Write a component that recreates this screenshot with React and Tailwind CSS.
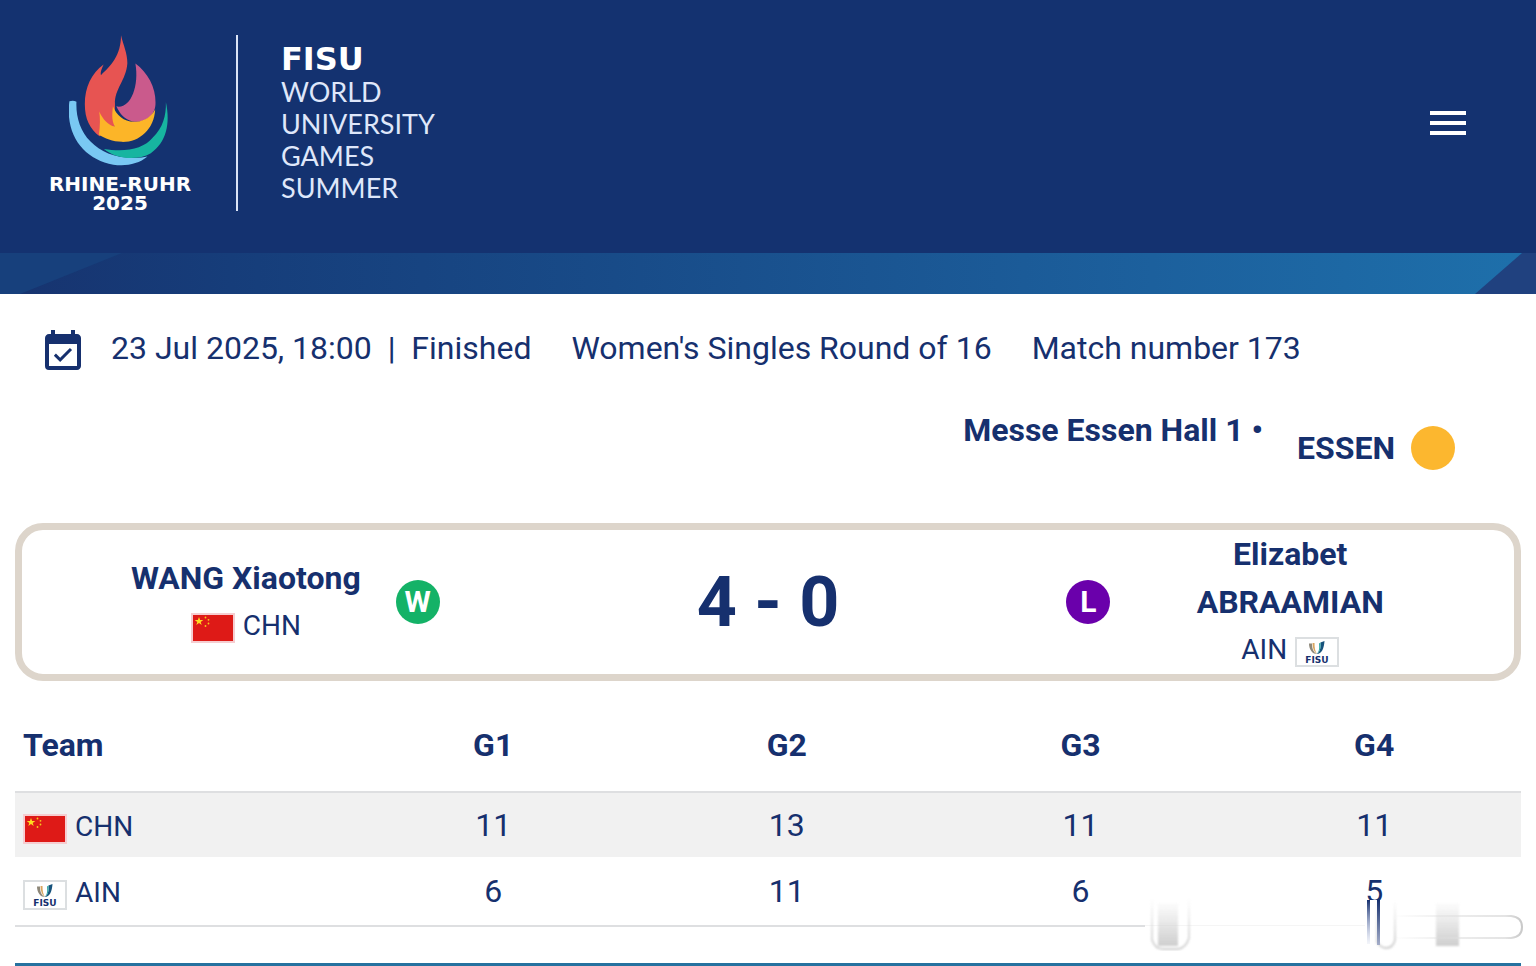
import React from "react";
import { MdEventAvailable, MdMenu } from "react-icons/md";

const games = ["G1", "G2", "G3", "G4"];

const teams = [
  { code: "CHN", scores: [11, 13, 11, 11] },
  { code: "AIN", scores: [6, 11, 6, 5] }
];

function FlameLogo() {
  return (
    <svg className="w-[102px] h-[132px]" viewBox="118 44 304 394" aria-hidden="true">
      <path
        fill="#79c8f3"
        d="M119 242 Q130 238 140 243 C138 285 150 330 182 362 C215 395 262 416 335 410 L352 407 C325 430 285 437 250 431 C165 417 105 345 119 242Z"
      />
      <path
        fill="#17b5a0"
        d="M407 245 C421 310 408 365 362 397 C318 422 255 412 222 384 C285 394 340 385 368 350 C398 322 408 285 407 245Z"
      />
      <path
        fill="#ca5a8c"
        d="M316 129 C352 155 377 200 376 245 C377 290 340 308 308 302 C283 296 270 280 259 257 C300 266 328 200 316 129Z"
      />
      <path
        fill="#e75452"
        d="M273 45 C280 75 292 98 292 128 C288 180 253 205 255 250 L254 318 L209 346 C180 325 165 295 165 250 C165 200 185 158 221 132 C214 147 211 156 213 164 C243 136 273 105 273 45Z"
      />
      <path
        fill="#fcb528"
        d="M249 257 C260 285 284 306 318 303 C344 300 362 289 375 266 C372 325 328 364 276 363 C248 362 224 353 207 341 C211 315 211 290 208 272 C219 296 235 313 254 317 C244 296 247 277 249 257Z"
      />
    </svg>
  );
}

function ChinaFlag() {
  return (
    <svg className="w-[44px] h-[30px] shrink-0" viewBox="0 0 44 30" role="img" aria-label="China">
      <rect width="44" height="30" fill="#f6cdd0" />
      <rect x="2" y="2" width="40" height="26" fill="#de1a17" />
      <path fill="#ffdc20" d="M8 4l1.100 3h3.200l-2.600 1.900 1 3L8 10.100 5.300 11.900l1-3L3.700 7h3.200z" />
      <g fill="#f8c91c">
        <circle cx="14.500" cy="4.500" r="0.9" />
        <circle cx="17.500" cy="6.800" r="0.9" />
        <circle cx="17.500" cy="10.500" r="0.9" />
        <circle cx="14.500" cy="13" r="0.9" />
      </g>
    </svg>
  );
}

function FisuFlag() {
  return (
    <svg className="w-[44px] h-[30px] shrink-0" viewBox="0 0 44 30" role="img" aria-label="FISU">
      <rect x="1" y="1" width="42" height="28" fill="#fff" stroke="#dcdfe1" strokeWidth="2" />
      <path d="M14 6.500 H17 C17 11 18 15 22 17 C17 17 14 12 14 6.500Z" fill="#8d8779" />
      <path d="M17.500 6 H19.500 C19.500 11 20 14 22 17 C19 15 17.500 11 17.500 6Z" fill="#d9a55e" />
      <path d="M29.500 4 L25.500 5.500 C26 11 25 15 21.500 17 C27 17 29 11 29.500 4Z" fill="#16527c" />
      <path d="M25.500 5.500 L24 6.500 C24.500 12 24 15 21.500 17 C25 15.500 26 11 25.500 5.500Z" fill="#34a7a5" />
      <text
        x="22"
        y="26"
        textAnchor="middle"
        fontSize="9"
        fontWeight="700"
        fontFamily="DejaVu Sans, sans-serif"
        fill="#16306e"
      >
        FISU
      </text>
    </svg>
  );
}

function Flag({ code }) {
  return code === "CHN" ? <ChinaFlag /> : <FisuFlag />;
}

function HeaderStrip() {
  return (
    <svg className="block w-full h-[41px]" viewBox="0 0 1536 41" preserveAspectRatio="none" aria-hidden="true">
      <defs>
        <linearGradient id="strip" x1="0" x2="1" y1="0" y2="0">
          <stop offset="0" stopColor="#17336f" />
          <stop offset="0.15" stopColor="#163d7a" />
          <stop offset="0.4" stopColor="#184b88" />
          <stop offset="0.75" stopColor="#1c609d" />
          <stop offset="1" stopColor="#1e70ab" />
        </linearGradient>
      </defs>
      <rect width="1536" height="41" fill="url(#strip)" />
      <path d="M0 0H122L20 41H0Z" fill="#17407c" />
      <path d="M1522 0H1536V41H1475Z" fill="#20417f" />
    </svg>
  );
}

// Faded glass shapes lying over the end of the table
function GlassOverlay() {
  return (
    <svg
      className="absolute right-[-4px] -bottom-6 w-[382px] h-[54px] pointer-events-none"
      viewBox="0 0 382 54"
      aria-hidden="true"
    >
      <defs>
        <linearGradient id="fade" x1="0" x2="0" y1="0" y2="1">
          <stop offset="0" stopColor="#cfcfcf" stopOpacity="0" />
          <stop offset="1" stopColor="#cfcfcf" />
        </linearGradient>
        <linearGradient id="inkA" x1="0" x2="0" y1="0" y2="1">
          <stop offset="0" stopColor="#16306e" />
          <stop offset="1" stopColor="#8fa0d0" stopOpacity="0.1" />
        </linearGradient>
        <linearGradient id="inkB" x1="0" x2="0" y1="0" y2="1">
          <stop offset="0" stopColor="#16306e" />
          <stop offset="1" stopColor="#a5aec9" />
        </linearGradient>
        <linearGradient id="pill" x1="250" x2="382" y1="0" y2="0" gradientUnits="userSpaceOnUse">
          <stop offset="0" stopColor="#d8d8d8" stopOpacity="0" />
          <stop offset="0.85" stopColor="#e4e4e4" />
          <stop offset="1" stopColor="#c4c4c4" />
        </linearGradient>
        <filter id="soft" x="-20%" y="-20%" width="140%" height="140%">
          <feGaussianBlur stdDeviation="0.8" />
        </filter>
      </defs>
      <rect x="2" y="3" width="380" height="51" fill="#fff" />
      <rect x="2" y="28" width="220" height="1" fill="#f5f5f5" />
      <g filter="url(#soft)">
        <rect x="15" y="4" width="20" height="45" fill="url(#fade)" />
        <path d="M9 3V43Q12 52 20 52H35Q43 51 46 41V2" fill="none" stroke="url(#fade)" strokeWidth="2" />
        <path d="M234 3V45Q238 51 243 51Q250 51 252 43V5" fill="none" stroke="url(#fade)" strokeWidth="2" />
        <rect x="293" y="4" width="23" height="45" fill="url(#fade)" />
      </g>
      <path
        d="M250 19H368Q379 20 379 30Q379 40 368 41H250"
        fill="none"
        stroke="url(#pill)"
        strokeWidth="2"
      />
      <rect x="224" y="3" width="3" height="44" fill="url(#inkA)" />
      <rect x="234" y="3" width="3" height="45" fill="url(#inkB)" />
    </svg>
  );
}

export default function App() {
  return (
    <div className="bg-white text-[#16306e] font-['Roboto',sans-serif] text-[32px] leading-[48px]">
      <header className="bg-[#143270]">
        <div className="flex items-center justify-between pl-12 pr-16 pt-[35px] pb-[42px]">
          <a href="#home" className="flex items-stretch text-white">
            <div className="w-36 flex flex-col items-center">
              <FlameLogo />
              <div className="mt-2 h-9 font-['DejaVu_Sans',sans-serif] font-bold text-[20px] leading-[19px] text-center whitespace-nowrap">
                RHINE-RUHR
                <br />
                2025
              </div>
            </div>
            <div className="ml-11 w-[2px] bg-[#dbe4f7]" />
            <div className="ml-[43px] pt-2 font-['Lato',sans-serif] text-[27px] leading-8 text-[#dfe7fa]">
              <div className="h-[33px] font-['DejaVu_Sans',sans-serif] font-bold text-[32px] text-white">FISU</div>
              <div>WORLD</div>
              <div>UNIVERSITY</div>
              <div>GAMES</div>
              <div>SUMMER</div>
            </div>
          </a>
          <button type="button" aria-label="Menu" className="text-white">
            <MdMenu className="size-12" />
          </button>
        </div>
        <HeaderStrip />
      </header>

      <main className="px-[15px]">
        <div className="flex items-center pl-6 pt-[26px]">
          <MdEventAvailable className="mt-2 size-12 shrink-0" />
          <div className="ml-6 flex gap-10 whitespace-nowrap">
            <span>23 Jul 2025, 18:00&nbsp; |&nbsp; Finished</span>
            <span>Women's Singles Round of 16</span>
            <span>Match number 173</span>
          </div>
        </div>

        <div className="flex justify-end items-start pr-[66px] mt-[30px] font-bold">
          <span>Messe Essen Hall 1 •</span>
          <div className="flex items-center gap-4 ml-[34px] pt-[18px]">
            <span>ESSEN</span>
            <span className="size-11 rounded-full bg-[#fcb72f]" />
          </div>
        </div>

        <section className="mt-[51px] border-[7px] border-[#ddd5cb] rounded-[28px] grid grid-cols-[30%_1fr_30%] items-center">
          <div className="grid grid-cols-[74px_1fr_74px] items-center">
            <div className="col-start-2 text-center">
              <div className="font-bold">WANG Xiaotong</div>
              <div className="flex items-center justify-center gap-2 text-[28px]">
                <div className="pt-1">
                  <ChinaFlag />
                </div>
                <span>CHN</span>
              </div>
            </div>
            <span className="size-11 rounded-full bg-[#14b267] text-white font-bold text-[30px] flex items-center justify-center">
              W
            </span>
          </div>
          <div className="text-center font-bold text-[70px] leading-[72px]">4 - 0</div>
          <div className="grid grid-cols-[74px_1fr_74px] items-center">
            <span className="size-11 rounded-full bg-[#6a00ab] text-white font-bold text-[30px] flex items-center justify-center">
              L
            </span>
            <div className="text-center">
              <div className="font-bold">
                Elizabet
                <br />
                ABRAAMIAN
              </div>
              <div className="flex items-center justify-center gap-2 text-[28px]">
                <span>AIN</span>
                <div className="pt-1">
                  <FisuFlag />
                </div>
              </div>
            </div>
          </div>
        </section>

        <div className="relative mt-4">
          <table className="w-full table-fixed border-collapse">
            <thead>
              <tr className="border-b-2 border-[#dedfe1]">
                <th className="w-[22%] px-2 pt-6 pb-[22px] text-left font-bold">Team</th>
                {games.map((g) => (
                  <th key={g} className="pt-6 pb-[22px] font-bold">{g}</th>
                ))}
              </tr>
            </thead>
            <tbody>
              {teams.map((t) => (
                <tr key={t.code} className="odd:bg-[#f1f1f1] last:h-[69px] last:border-b-2 last:border-[#dedfe1]">
                  <td className="px-2 pt-1">
                    <div className="flex items-center gap-2 text-[28px]">
                      <div className="pt-1">
                        <Flag code={t.code} />
                      </div>
                      <span>{t.code}</span>
                    </div>
                  </td>
                  {t.scores.map((s, i) => (
                    <td key={games[i]} className="py-2 text-center">{s}</td>
                  ))}
                </tr>
              ))}
            </tbody>
          </table>
          <GlassOverlay />
        </div>

        <div className="mt-9 h-[3px] bg-[#26719f]" />
      </main>
    </div>
  );
}
